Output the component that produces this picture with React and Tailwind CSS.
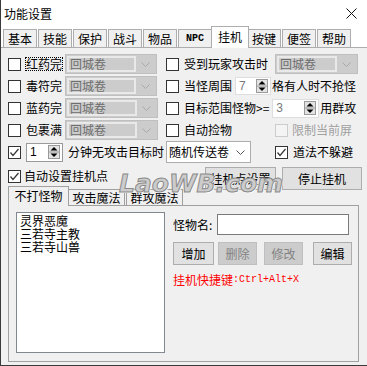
import React from "react";

const Check = ({ checked, disabled }) => (
  <span
    className={
      disabled
        ? "w-[13px] h-[13px] shrink-0 border border-[#cccccc] bg-[#f4f4f4] flex items-center justify-center"
        : "w-[13px] h-[13px] shrink-0 border border-[#333333] bg-white flex items-center justify-center"
    }
  >
    {checked && (
      <svg width="11" height="11" viewBox="0 0 11 11">
        <polyline points="1.5,5.5 4,8.5 9.5,2" fill="none" stroke="#333" strokeWidth="1.2" />
      </svg>
    )}
  </span>
);

const Chev = ({ color }) => (
  <svg width="9" height="5" viewBox="0 0 9 5">
    <polyline points="0.5,0.5 4.5,4.5 8.5,0.5" fill="none" stroke={color} strokeWidth="1" />
  </svg>
);

const DCombo = ({ w, ml }) => (
  <div className={`h-[20px] border border-[#bfbfbf] bg-[#cccccc] flex p-px shrink-0 ${w} ${ml}`}>
    <div className="flex-1 border-2 border-[#e9e9e9] flex items-center pl-px text-[#6d6d6d] leading-none">
      回城卷
    </div>
    <div className="w-[19px] flex items-center justify-center">
      <Chev color="#a8a8a8" />
    </div>
  </div>
);

const SpinBtn = () => (
  <svg width="12" height="14" viewBox="0 0 12 14" className="shrink-0">
    <rect x="0.5" y="0.5" width="11" height="13" fill="#e3e3e3" stroke="#9a9a9a" />
    <line x1="1" y1="7" x2="11" y2="7" stroke="#9a9a9a" />
    <polygon points="6,2 9.5,5.5 2.5,5.5" fill="#000" />
    <polygon points="2.5,8.5 9.5,8.5 6,12" fill="#000" />
  </svg>
);

const Btn = ({ children, w, ml, disabled }) => (
  <div
    className={
      (disabled
        ? "border-[#bfbfbf] bg-[#cccccc] text-[#838383] "
        : "border-[#adadad] bg-[#e1e1e1] text-black ") +
      `h-[23px] border flex items-center justify-center shrink-0 leading-none ${w} ${ml}`
    }
  >
    {children}
  </div>
);

const Tab = ({ children, sel, mono }) => (
  <div
    className={
      sel
        ? "relative z-10 -mx-[2px] w-[38px] h-[22px] -mb-px bg-white border border-b-0 border-[#adadad] flex items-center justify-center leading-none pb-[2px]"
        : "w-[34px] h-[18px] mr-px bg-[#f0f0f0] border border-b-0 border-[#adadad] flex items-center justify-center leading-none"
    }
  >
    <span className={mono ? "font-['Liberation_Mono',monospace] text-[10px] font-bold" : ""}>{children}</span>
  </div>
);

export default function App() {
  return (
    <div className="w-[367px] h-[366px] bg-[#f0f0f0] border-l border-b border-[#3a3a3a] relative overflow-hidden font-['Noto_Sans_CJK_SC','Noto_Sans',sans-serif] text-[12px] text-black leading-none">
      {/* title bar */}
      <div className="h-[27px] bg-white flex items-center justify-between pl-[3px] pr-[10px]">
        <span className="text-[12px] tracking-[0px]">功能设置</span>
        <svg width="11" height="11" viewBox="0 0 11 11">
          <line x1="0.5" y1="0.5" x2="10.5" y2="10.5" stroke="#111" strokeWidth="1" />
          <line x1="10.5" y1="0.5" x2="0.5" y2="10.5" stroke="#111" strokeWidth="1" />
        </svg>
      </div>

      {/* tab strip */}
      <div className="h-[21px] bg-white flex items-end pl-[2px] border-b border-[#adadad]">
        <Tab>基本</Tab>
        <Tab>技能</Tab>
        <Tab>保护</Tab>
        <Tab>战斗</Tab>
        <Tab>物品</Tab>
        <Tab mono>NPC</Tab>
        <Tab sel>挂机</Tab>
        <Tab>按键</Tab>
        <Tab>便签</Tab>
        <Tab>帮助</Tab>
      </div>

      {/* content */}
      <div className="pl-[7px] pt-[5px]">
        <div className="flex">
          {/* left column */}
          <div className="w-[158px] flex flex-col">
            <div className="h-[22px] flex items-center">
              <Check />
              <span className="ml-[4px] h-[14px] px-0 border border-dotted border-black flex items-center">红药完</span>
              <DCombo w="w-[92px]" ml="ml-[2px]" />
            </div>
            <div className="h-[22px] flex items-center">
              <Check />
              <span className="ml-[5px]">毒符完</span>
              <DCombo w="w-[92px]" ml="ml-[3px]" />
            </div>
            <div className="h-[22px] flex items-center">
              <Check />
              <span className="ml-[5px]">蓝药完</span>
              <DCombo w="w-[93px]" ml="ml-[3px]" />
            </div>
            <div className="h-[22px] flex items-center">
              <Check />
              <span className="ml-[5px]">包裹满</span>
              <DCombo w="w-[93px]" ml="ml-[3px]" />
            </div>
          </div>
          {/* right column */}
          <div className="flex flex-col">
            <div className="h-[22px] flex items-center">
              <Check />
              <span className="ml-[5px]">受到玩家攻击时</span>
              <DCombo w="w-[83px]" ml="ml-[7px]" />
            </div>
            <div className="h-[22px] flex items-center">
              <Check />
              <span className="ml-[5px]">当怪周围</span>
              <div className="ml-[3px] w-[36px] h-[18px] border border-[#dedede] bg-white flex items-center pl-[3px] pr-[2px]">
                <span className="flex-1 text-[#7a7a7a] font-['Liberation_Sans',sans-serif] font-light">7</span>
                <SpinBtn />
              </div>
              <span className="ml-px">格有人时不抢怪</span>
            </div>
            <div className="h-[22px] flex items-center">
              <Check />
              <span className="ml-[5px]">目标范围怪物&gt;=</span>
              <div className="ml-[3px] w-[47px] h-[19px] border border-[#dedede] bg-white flex items-center pl-[3px] pr-[2px]">
                <span className="flex-1 text-[#7a7a7a] font-['Liberation_Sans',sans-serif] font-light">3</span>
                <SpinBtn />
              </div>
              <span className="ml-px">用群攻</span>
            </div>
            <div className="h-[22px] flex items-center">
              <Check />
              <span className="ml-[5px]">自动捡物</span>
              <span className="ml-[43px]">
                <Check disabled />
              </span>
              <span className="ml-[4px] text-[#a0a0a0]">限制当前屏</span>
            </div>
          </div>
        </div>

        {/* row 5 */}
        <div className="h-[22px] flex items-center">
          <Check checked />
          <div className="ml-[5px] w-[37px] h-[19px] border border-[#9a9a9a] bg-white flex items-center pl-[3px] pr-[2px]">
            <span className="flex-1 font-['Liberation_Sans',sans-serif]">1</span>
            <SpinBtn />
          </div>
          <span className="ml-[5px]">分钟无攻击目标时</span>
          <div className="ml-[2px] w-[85px] h-[22px] border border-[#adadad] bg-white flex items-center pl-[2px] pr-[5px]">
            <span className="flex-1">随机传送卷</span>
            <Chev color="#555" />
          </div>
          <span className="ml-[24px]">
            <Check checked />
          </span>
          <span className="ml-[5px]">道法不躲避</span>
        </div>

        {/* row 6 */}
        <div className="mt-[3px] h-[20px] flex items-center">
          <Check checked />
          <span className="ml-[3px]">自动设置挂机点</span>
          <div className="self-start mt-px flex">
            <Btn w="w-[71px]" ml="ml-[97px]">挂机点设置</Btn>
            <Btn w="w-[80px]" ml="ml-[6px]">停止挂机</Btn>
          </div>
        </div>

        {/* inner tabs */}
        <div className="h-[19px] flex items-end pl-px w-[351px] relative">
          <div className="relative z-10 w-[61px] -ml-px h-[20px] -mb-px bg-[#f0f0f0] border border-b-0 border-[#a0a0a0] flex items-center justify-center pb-px">
            不打怪物
          </div>
          <div className="w-[56px] h-[16px] bg-[#f0f0f0] border border-b-0 border-l-0 border-[#a0a0a0] flex items-center justify-center">
            攻击魔法
          </div>
          <div className="ml-px w-[57px] h-[16px] bg-[#f0f0f0] border border-b-0 border-[#a0a0a0] flex items-center justify-center">
            群攻魔法
          </div>
        </div>
        <div className="w-[351px] h-[157px] border border-[#a0a0a0] flex pl-[7px] pt-[6px]">
          <div className="w-[149px] h-[141px] border border-[#828790] bg-white pl-[3px] pt-px leading-[13px] flex flex-col">
            <span>灵界恶魔</span>
            <span>三若寺主教</span>
            <span>三若寺山兽</span>
          </div>
          <div className="ml-[8px] pt-[2px] flex flex-col">
            <div className="flex items-center h-[21px]">
              <span>怪物名:</span>
              <div className="ml-[5px] w-[132px] h-[21px] border border-[#7a7a7a] bg-white" />
            </div>
            <div className="mt-[7px] flex">
              <Btn w="w-[41px]" ml="ml-0">增加</Btn>
              <Btn w="w-[39px]" ml="ml-[4px]" disabled>删除</Btn>
              <Btn w="w-[39px]" ml="ml-[7px]" disabled>修改</Btn>
              <Btn w="w-[39px]" ml="ml-[10px]">编辑</Btn>
            </div>
            <div className="mt-[9px] flex items-center text-[#ff0000] h-[12px]">
              <span>挂机快捷键</span>
              <span className="font-['Liberation_Mono',monospace] text-[10px]">:Ctrl+Alt+X</span>
            </div>
          </div>
        </div>
      </div>

      {/* watermark */}
      <div className="absolute left-[118px] top-[171px] pointer-events-none font-['DejaVu_Sans',sans-serif] font-bold italic text-[25px] tracking-[0px] text-[#cccccc] [-webkit-text-stroke:1px_#8a8a8a] [text-shadow:1px_1px_0_#ffffff]">
        LaoWB.com
      </div>
    </div>
  );
}
